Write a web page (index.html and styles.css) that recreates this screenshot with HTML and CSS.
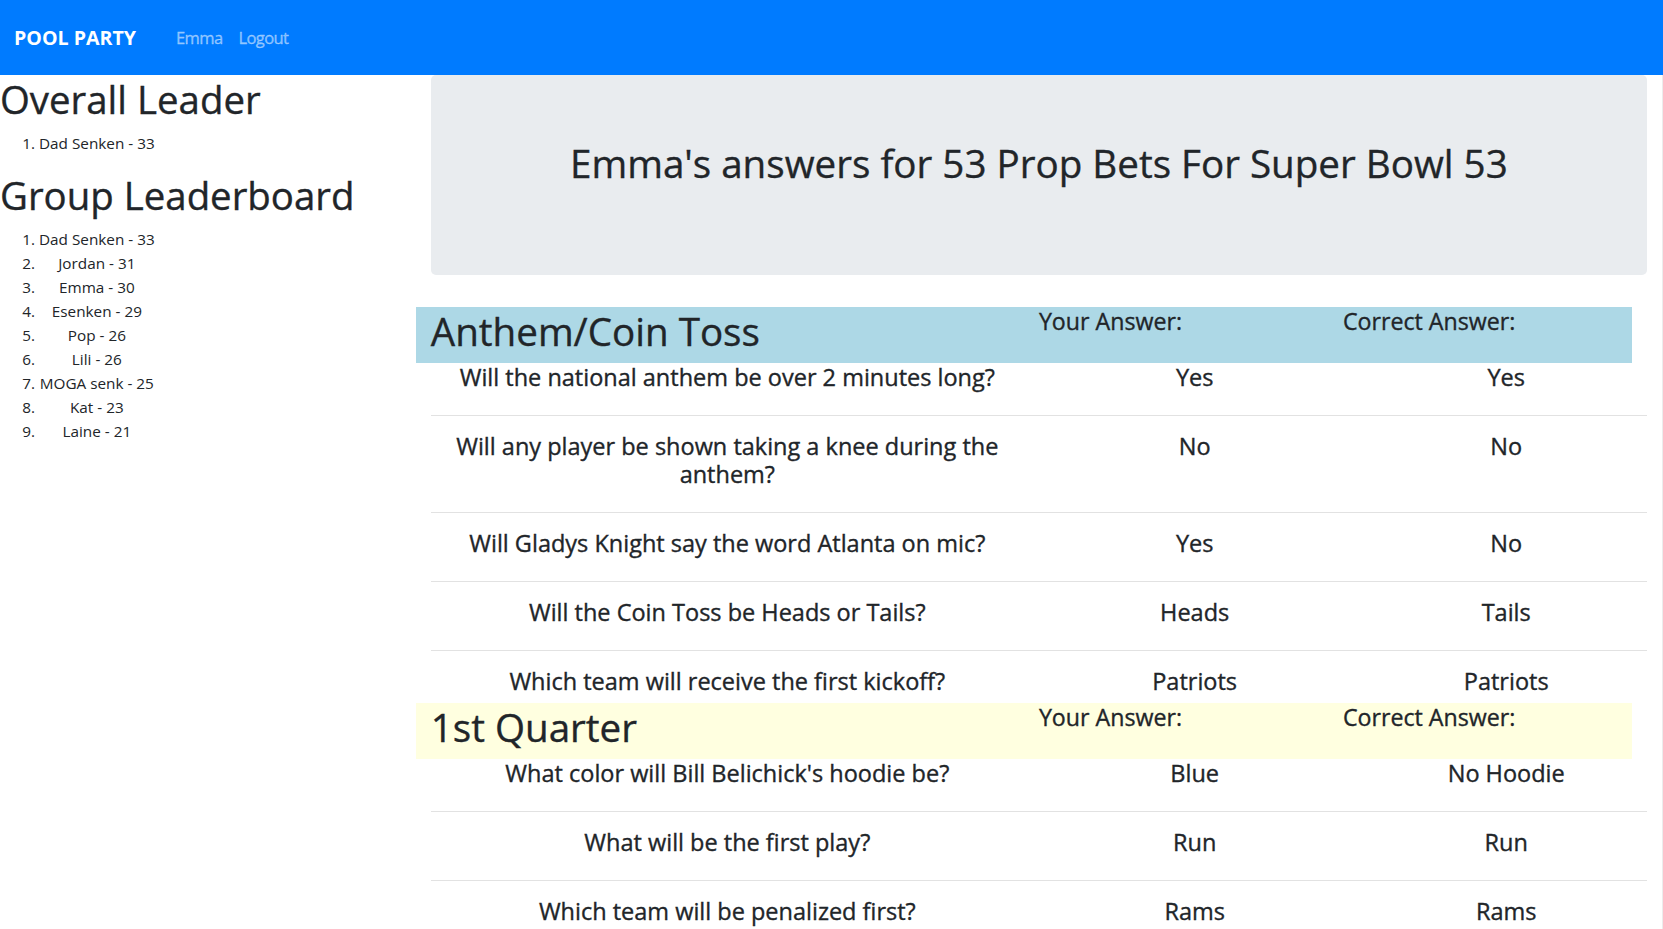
FILE: index.html
```html
<!DOCTYPE html>
<html lang="en">
<head>
<meta charset="utf-8">
<title>Pool Party</title>
<link rel="stylesheet" href="styles.css">
</head>
<body>
<nav class="navbar">
  <a class="brand" href="#">POOL PARTY</a>
  <ul class="nav-links">
    <li><a href="#">Emma</a></li>
    <li><a href="#">Logout</a></li>
  </ul>
</nav>
<div class="main">
  <aside class="sidebar">
    <h1 class="side-title">Overall Leader</h1>
    <ol class="board">
      <li>Dad Senken - 33</li>
    </ol>
    <h1 class="side-title">Group Leaderboard</h1>
    <ol class="board">
      <li>Dad Senken - 33</li>
      <li>Jordan - 31</li>
      <li>Emma - 30</li>
      <li>Esenken - 29</li>
      <li>Pop - 26</li>
      <li>Lili - 26</li>
      <li>MOGA senk - 25</li>
      <li>Kat - 23</li>
      <li>Laine - 21</li>
    </ol>
  </aside>
  <section class="content">
    <div class="jumbotron">
      <h1 class="jumbo-title">Emma's answers for 53 Prop Bets For Super Bowl 53</h1>
    </div>

    <div class="band band-blue">
      <h1 class="band-title">Anthem/Coin Toss</h1>
      <h4 class="band-label">Your Answer:</h4>
      <h4 class="band-label">Correct Answer:</h4>
    </div>
    <div class="qrow">
      <h4 class="cell">Will the national anthem be over 2 minutes long?</h4>
      <h4 class="cell">Yes</h4>
      <h4 class="cell">Yes</h4>
    </div>
    <hr class="sep">
    <div class="qrow">
      <h4 class="cell">Will any player be shown taking a knee during the anthem?</h4>
      <h4 class="cell">No</h4>
      <h4 class="cell">No</h4>
    </div>
    <hr class="sep">
    <div class="qrow">
      <h4 class="cell">Will Gladys Knight say the word Atlanta on mic?</h4>
      <h4 class="cell">Yes</h4>
      <h4 class="cell">No</h4>
    </div>
    <hr class="sep">
    <div class="qrow">
      <h4 class="cell">Will the Coin Toss be Heads or Tails?</h4>
      <h4 class="cell">Heads</h4>
      <h4 class="cell">Tails</h4>
    </div>
    <hr class="sep">
    <div class="qrow">
      <h4 class="cell">Which team will receive the first kickoff?</h4>
      <h4 class="cell">Patriots</h4>
      <h4 class="cell">Patriots</h4>
    </div>

    <div class="band band-yellow">
      <h1 class="band-title">1st Quarter</h1>
      <h4 class="band-label">Your Answer:</h4>
      <h4 class="band-label">Correct Answer:</h4>
    </div>
    <div class="qrow">
      <h4 class="cell">What color will Bill Belichick's hoodie be?</h4>
      <h4 class="cell">Blue</h4>
      <h4 class="cell">No Hoodie</h4>
    </div>
    <hr class="sep">
    <div class="qrow">
      <h4 class="cell">What will be the first play?</h4>
      <h4 class="cell">Run</h4>
      <h4 class="cell">Run</h4>
    </div>
    <hr class="sep">
    <div class="qrow">
      <h4 class="cell">Which team will be penalized first?</h4>
      <h4 class="cell">Rams</h4>
      <h4 class="cell">Rams</h4>
    </div>
  </section>
</div>
</body>
</html>
```
FILE: styles.css
```css
* { box-sizing: border-box; }

body {
  margin: 0;
  font-family: "Open Sans", "Noto Sans", sans-serif;
  font-size: 15.3px;
  line-height: 24px;
  color: #212529;
  background: #fff;
}

/* Navbar */
.navbar {
  height: 75px;
  background: #007bff;
  display: flex;
  align-items: center;
  padding: 0 14px;
}
.brand {
  font-weight: 700;
  font-size: 19.6px;
  line-height: 30px;
  color: #fff;
  text-decoration: none;
  margin-right: 32px;
}
.nav-links {
  list-style: none;
  display: flex;
  margin: 0;
  padding: 0;
}
.nav-links a {
  display: block;
  padding: 0 8px;
  font-size: 16.5px;
  letter-spacing: -0.6px;
  line-height: 30px;
  color: rgba(255, 255, 255, 0.5);
  -webkit-text-stroke: 0.3px rgba(255, 255, 255, 0.5);
  text-decoration: none;
}

/* Layout */
.main {
  display: grid;
  grid-template-columns: 25% 75%;
}
.sidebar {
  padding: 0;
}
.content {
  padding: 0 15px;
  border-right: 1px solid #ececec;
  min-height: 860px;
}

/* Headings share a slightly heavier stroke */
.side-title,
.jumbo-title,
.band-title,
.band-label,
.cell {
  font-weight: 400;
  -webkit-text-stroke: 0.35px #212529;
}

/* Sidebar */
.side-title {
  font-size: 38.4px;
  line-height: 48px;
  margin: 0 0 8px;
}
.board {
  width: fit-content;
  margin: 0 0 16px;
  padding-left: 39px;
  text-align: center;
}

/* Jumbotron */
.jumbotron {
  background: #e9ecef;
  border-radius: 5px;
  padding: 64px 32px;
  margin-bottom: 32px;
  text-align: center;
}
.jumbo-title {
  font-size: 38.6px;
  line-height: 48px;
  margin: 0 0 24px;
}

/* Section bands */
.band {
  display: grid;
  grid-template-columns: 50% 25% 25%;
  margin-left: -15px;
  width: 100%;
}
.band-blue { background: #add8e6; }
.band-yellow { background: #ffffe0; }
.band-title {
  font-size: 38.6px;
  line-height: 48px;
  margin: 0 0 8px;
  padding: 0 15px;
}
.band-label {
  font-size: 23.2px;
  line-height: 28px;
  margin: 0;
  padding: 0 15px;
}

/* Question rows */
.qrow {
  display: grid;
  grid-template-columns: 50% 25% 25%;
  margin: 0 -15px;
  text-align: center;
}
.cell {
  font-size: 23.5px;
  line-height: 28px;
  margin: 0 0 8px;
  padding: 0 15px;
}
.sep {
  border: 0;
  border-top: 1px solid #e2e2e2;
  margin: 16px 0;
  height: 0;
}
```
